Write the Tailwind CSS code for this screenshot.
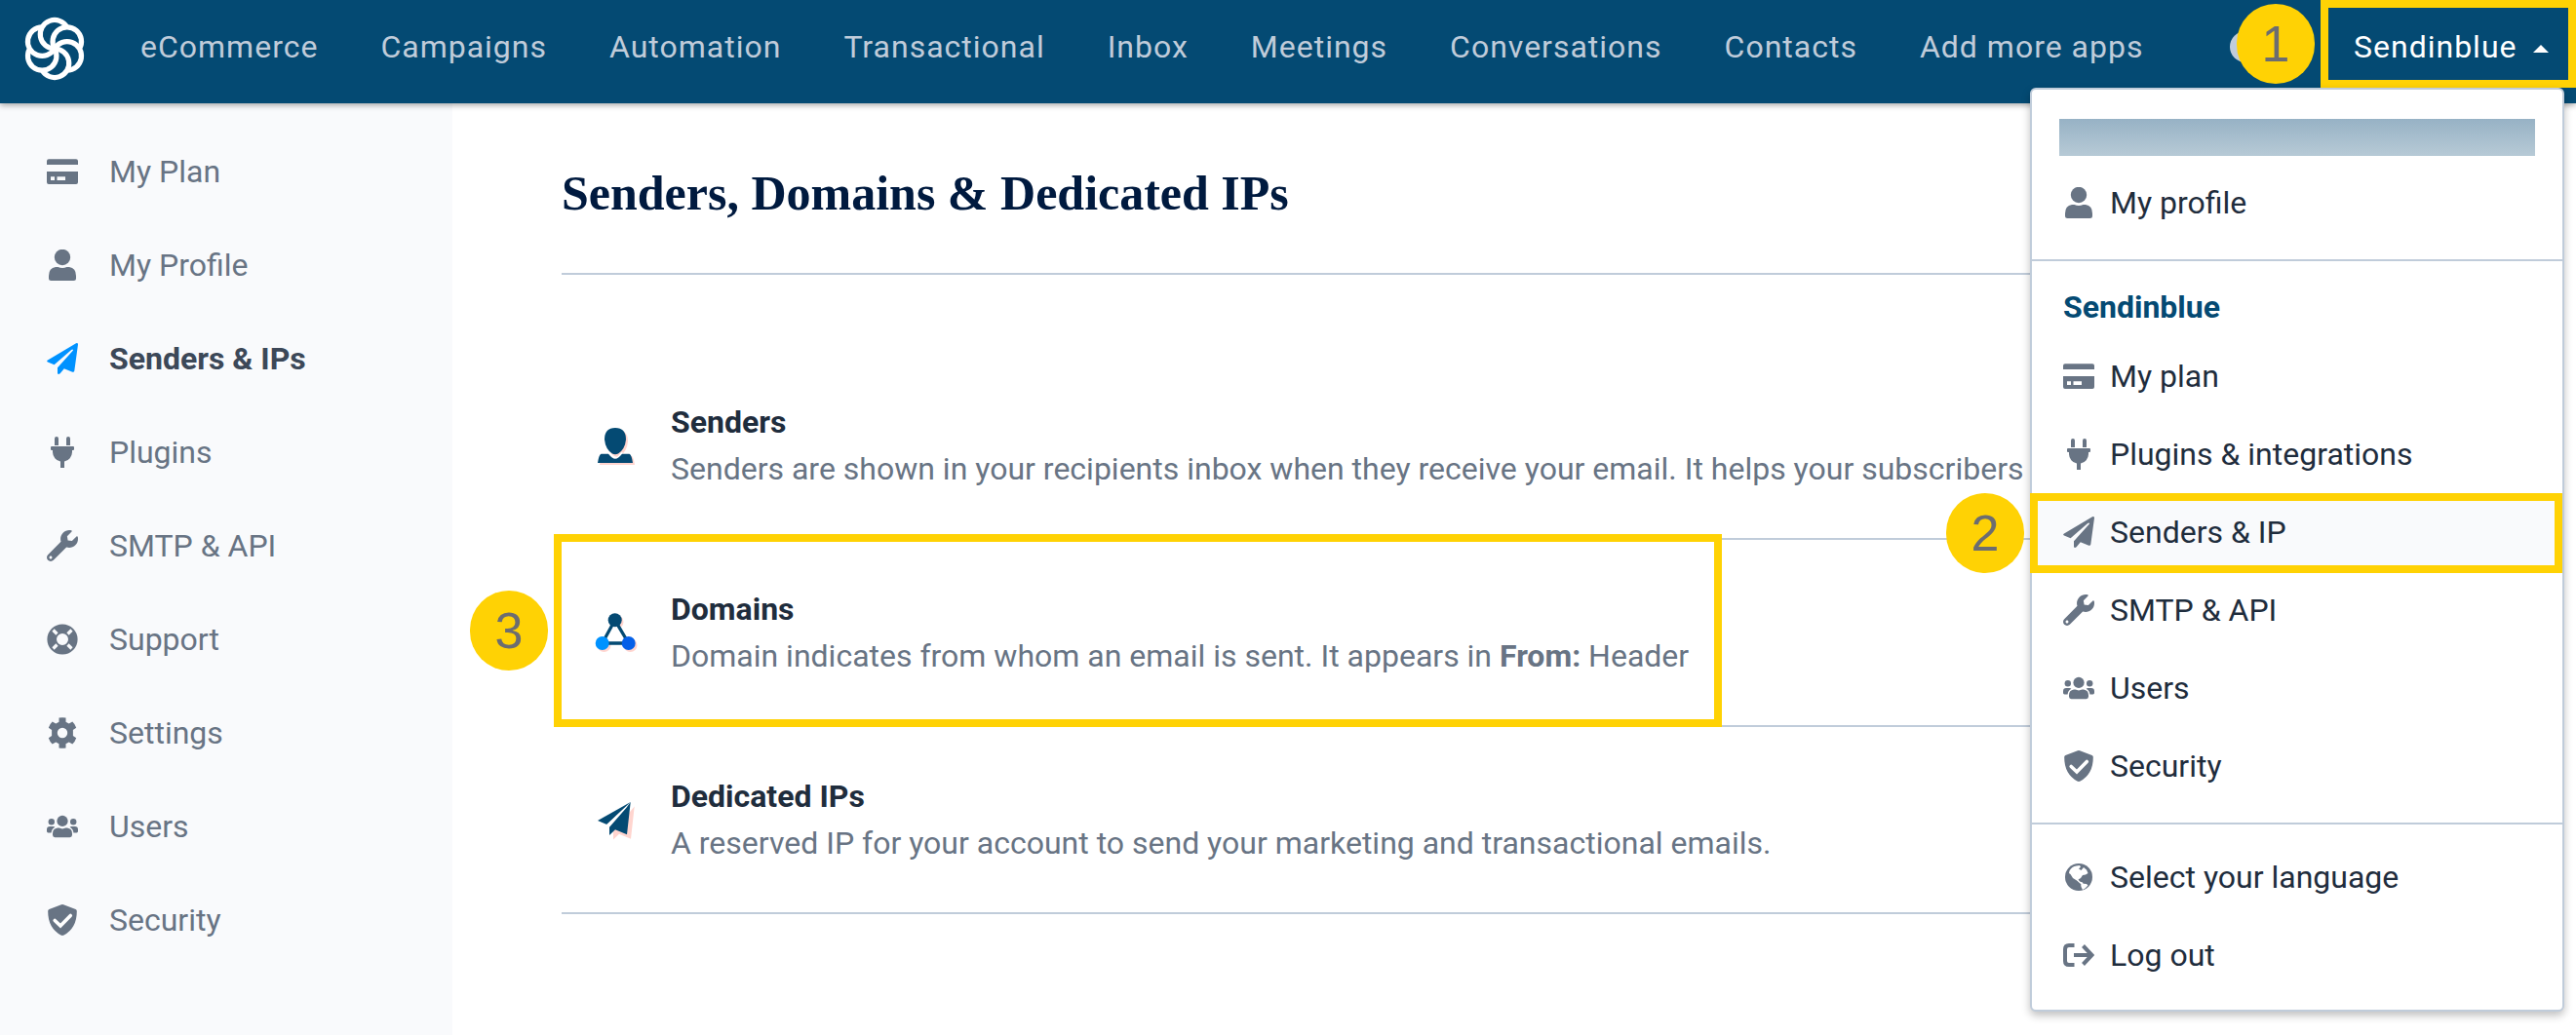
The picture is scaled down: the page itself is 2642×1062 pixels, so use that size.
<!DOCTYPE html>
<html lang="en">
<head>
<meta charset="utf-8">
<meta name="viewport" content="width=device-width, initial-scale=1">
<title>Senders, Domains &amp; Dedicated IPs</title>
<script src="https://cdn.jsdelivr.net/npm/@tailwindcss/browser@4"></script>
</head>
<body class="flex min-h-screen flex-col overflow-x-hidden bg-white font-[Roboto,sans-serif] text-[32px] leading-[48px] text-[#687484]">

<!-- Shared icon shapes -->
<svg class="hidden" aria-hidden="true">
  <symbol id="card" viewBox="0 0 32 32"><path d="M2 3.300h28q2 0 2 2V9H0V5.300q0-2 2-2zM0 16h32v11q0 2-2 2H2q-2 0-2-2zM4 21.200v3.800h4v-3.800zm6.500 0v3.800H19v-3.800z" fill-rule="evenodd"/></symbol>
  <symbol id="user" viewBox="0 0 32 32"><circle cx="16" cy="8" r="8.200"/><path d="M9 18h2.500q4.500 2 9 0H23q7 1 7 9v2.500q0 2.500-2.500 2.500h-23Q2 32 2 29.500V27q0-8 7-9z"/></symbol>
  <symbol id="plane" viewBox="0 0 32 32"><path d="M1 17.600 30 .2Q32-.4 32 1.500L28.300 28.500Q27.900 30.300 26.300 29.700L17.800 26.300 13.600 31.300Q11.200 33 11 30.400V25.200L27 7.500Q26.800 6 25.200 7L7.600 22.200 1 19.600Q-.7 18.600 1 17.600z"/></symbol>
  <symbol id="plug" viewBox="0 0 32 32"><path d="M8 2a2 2 0 0 1 4 0v7H8zM20 2a2 2 0 0 1 4 0v7h-4zM5 10h22q1 0 1 1v2q0 1-1 1h-1v2a10 10 0 0 1-8 9.600V32h-4v-6.400A10 10 0 0 1 6 16v-2H5q-1 0-1-1v-2q0-1 1-1z"/></symbol>
  <symbol id="wrench" viewBox="0 0 512 512"><path d="M507.730 109.100c-2.240-9.030-13.540-12.090-20.120-5.510l-74.360 74.360-67.880-11.310-11.310-67.880 74.360-74.360c6.620-6.620 3.430-17.900-5.660-20.160-47.380-11.740-99.550.910-136.580 37.930-39.640 39.640-50.550 97.100-34.050 147.200L18.740 402.760c-24.990 24.990-24.990 65.510 0 90.500 24.990 24.990 65.510 24.990 90.500 0l213.210-213.210c50.120 16.710 107.470 5.680 147.370-34.220 37.070-37.070 49.700-89.320 37.910-136.730zM64 472c-13.250 0-24-10.750-24-24 0-13.260 10.750-24 24-24s24 10.740 24 24c0 13.250-10.750 24-24 24z"/></symbol>
  <symbol id="ring" viewBox="0 0 32 32"><circle cx="16" cy="16" r="10.800" fill="none" stroke="currentColor" stroke-width="9.600"/><path d="m6.500 6.500 4 4m11 11 4 4m0-19-4 4m-11 11-4 4" fill="none" stroke="#f9fafc" stroke-width="3.200"/></symbol>
  <symbol id="gear" viewBox="0 0 32 32"><path d="M12.500.6q3.500-.8 7 0V4.800l3.200 1.800 3.600-2q2.800 2.600 3.900 6.200l-3.300 2.300v5.800l3.300 2.300q-1.100 3.600-3.900 6.200l-3.600-2-3.200 1.800v4.200q-3.500.8-7 0v-4.200l-3.200-1.800-3.600 2Q2.900 24.800 1.800 21.200l3.300-2.300v-5.800L1.800 10.800Q2.900 7.200 5.700 4.600l3.600 2 3.200-1.800zM16 10.800a5.200 5.200 0 1 0 0 10.400 5.200 5.200 0 0 0 0-10.400z" fill-rule="evenodd"/></symbol>
  <symbol id="users" viewBox="0 0 32 32"><circle cx="16" cy="10.400" r="5.600"/><circle cx="4.800" cy="11.200" r="3.200"/><circle cx="27.200" cy="11.200" r="3.200"/><path d="M11 17.600h1.500q3.500 1.600 7 0H21q5 .8 5 5.800v1.400q0 2.400-2.400 2.400H8.400Q6 27.200 6 24.800v-1.400q0-5 5-5.800zM3.200 16H6.400q1.200 0 2 .8Q5 18.400 4.600 22.400H1.400Q0 22.400 0 21v-1.800Q0 16 3.200 16zM28.800 16q3.200 0 3.200 3.200V21q0 1.400-1.400 1.400h-3.200Q27 18.400 23.600 16.800q.8-.8 2-.8z"/></symbol>
  <symbol id="shield" viewBox="0 0 32 32"><path d="M14.900.3q1.100-.5 2.200 0L29.600 5q1.200.5 1.200 1.800Q31 24 17.600 31.600q-1.600.8-3.200 0Q1 24 1.200 6.800 1.200 5.500 2.400 5z"/><path d="m8.200 16.500 5.800 5.500L24.300 11.500" fill="none" stroke="#fff" stroke-width="3.600" stroke-linecap="round"/></symbol>
  <symbol id="globe" viewBox="0 0 32 32"><circle cx="16" cy="16" r="14"/><path d="M6.500 9.500Q9 5 13.500 4.500L17 4l1 1.500-2 2 2.500 1.500L21 6l3 2.500L25.500 12 23 13.500l-3 .5-2 3-2.500 1.500 1.500 2 3 1 1 2-3-.5-4-3.500-4-2.500-2.500-4-1.500-1zM18 22.500l6 .5 1.500 1.500-3 3-2.500 1.500-1.500-3z" fill="#fff"/></symbol>
  <symbol id="exit" viewBox="0 0 32 32"><path d="M11.500 6H6Q2 6 2 10v12q0 4 4 4h5.500M11 16h18M20.500 6.500 29.500 16l-9 9.500" fill="none" stroke="currentColor" stroke-width="4"/></symbol>
</svg>

<header class="relative z-10 flex h-[106px] shrink-0 items-start bg-[#044a73] pl-6 text-[#c0ccda] shadow-[0_2px_6px_rgba(0,0,0,0.35)]">
  <a href="#" aria-label="Home" class="mt-[18px] block size-16 shrink-0">
    <svg viewBox="-32 -32 64 64" class="size-16 overflow-visible" fill="none" stroke="#fff" stroke-width="5.200">
      <path d="M0 0A14.750 14.750 0 1 1 12.770-22.120"/>
      <path d="M0 0A14.750 14.750 0 1 1 12.770-22.120" transform="rotate(60)"/>
      <path d="M0 0A14.750 14.750 0 1 1 12.770-22.120" transform="rotate(120)"/>
      <path d="M0 0A14.750 14.750 0 1 1 12.770-22.120" transform="rotate(180)"/>
      <path d="M0 0A14.750 14.750 0 1 1 12.770-22.120" transform="rotate(240)"/>
      <path d="M0 0A14.750 14.750 0 1 1 12.770-22.120" transform="rotate(300)"/>
    </svg>
  </a>
  <nav class="ml-14 mt-6 flex gap-16 whitespace-nowrap tracking-[1px]">
    <a href="#">eCommerce</a>
    <a href="#">Campaigns</a>
    <a href="#">Automation</a>
    <a href="#">Transactional</a>
    <a href="#">Inbox</a>
    <a href="#">Meetings</a>
    <a href="#">Conversations</a>
    <a href="#">Contacts</a>
    <a href="#">Add more apps</a>
  </nav>

  <div class="relative ml-auto w-[262px] shrink-0">
    <span class="absolute -left-[93px] top-[32px] size-8 rounded-full bg-[#c0ccda]"></span>
    <span class="absolute -left-[86px] top-1 flex h-[82px] w-20 items-center justify-center rounded-full bg-[#ffd204] font-[Liberation_Sans,Arial,sans-serif] text-[52px] text-[#6c6d70]">1</span>
    <button type="button" class="flex h-24 w-full items-center gap-4 pl-[34px] tracking-[1px] text-white">
      Sendinblue
      <svg viewBox="0 0 16 8" class="mt-1 h-2 w-4" fill="currentColor"><path d="M0 8 8 0l8 8z"/></svg>
    </button>
    <span class="pointer-events-none absolute inset-x-0 top-0 h-[90px] border-8 border-[#ffd204]"></span>

    <div class="absolute right-3 top-[90px] w-[548px] rounded-md border-2 border-[#c0ccda] bg-white text-[#1f2d3d] shadow-[0_4px_8px_rgba(0,0,0,0.25)]">
      <div class="border-b-2 border-[#c0ccda] pb-[18px] pt-[30px]">
        <div class="mx-7 h-[38px] bg-linear-to-b from-[#97b2c5] to-[#b7cad6]"></div>
        <a href="#" class="mt-2 flex h-20 items-center gap-4 px-8"><svg class="size-8 fill-current text-[#687484]"><use href="#user"/></svg>My profile</a>
      </div>
      <div class="border-b-2 border-[#c0ccda] pb-[18px] pt-4">
        <h2 class="flex h-[62px] items-center px-8 font-bold text-[#044a73]">Sendinblue</h2>
        <a href="#" class="flex h-20 items-center gap-4 px-8"><svg class="size-8 fill-current text-[#687484]"><use href="#card"/></svg>My plan</a>
        <a href="#" class="flex h-20 items-center gap-4 px-8"><svg class="size-8 fill-current text-[#687484]"><use href="#plug"/></svg>Plugins &amp; integrations</a>
        <a href="#" class="relative flex h-20 items-center gap-4 bg-[#f9fafc] px-8">
          <svg class="size-8 fill-current text-[#687484]"><use href="#plane"/></svg>Senders &amp; IP
          <span class="absolute -bottom-0.5 -left-0.5 right-0 top-0 border-8 border-[#ffd204]"></span>
          <span class="absolute -left-[88px] top-0 flex h-[82px] w-20 items-center justify-center rounded-full bg-[#ffd204] font-[Liberation_Sans,Arial,sans-serif] text-[52px] text-[#6c6d70]">2</span>
        </a>
        <a href="#" class="flex h-20 items-center gap-4 px-8"><svg class="size-8 fill-current text-[#687484]"><use href="#wrench"/></svg>SMTP &amp; API</a>
        <a href="#" class="flex h-20 items-center gap-4 px-8"><svg class="size-8 fill-current text-[#687484]"><use href="#users"/></svg>Users</a>
        <a href="#" class="flex h-20 items-center gap-4 px-8"><svg class="size-8 fill-current text-[#687484]"><use href="#shield"/></svg>Security</a>
      </div>
      <div class="pb-4 pt-[14px]">
        <a href="#" class="flex h-20 items-center gap-4 px-8"><svg class="size-8 fill-current text-[#687484]"><use href="#globe"/></svg>Select your language</a>
        <a href="#" class="flex h-20 items-center gap-4 px-8"><svg class="size-8 fill-current text-[#687484]"><use href="#exit"/></svg>Log out</a>
      </div>
    </div>
  </div>
</header>

<div class="flex flex-1">
  <aside class="w-[464px] shrink-0 bg-[#f9fafc] pt-[22px]">
    <nav>
      <a href="#" class="flex h-24 items-center gap-8 pl-12"><svg class="size-8 fill-current"><use href="#card"/></svg>My Plan</a>
      <a href="#" class="flex h-24 items-center gap-8 pl-12"><svg class="size-8 fill-current"><use href="#user"/></svg>My Profile</a>
      <a href="#" class="flex h-24 items-center gap-8 pl-12 font-bold text-[#3c4858]"><svg class="size-8 fill-current text-[#0092ff]"><use href="#plane"/></svg>Senders &amp; IPs</a>
      <a href="#" class="flex h-24 items-center gap-8 pl-12"><svg class="size-8 fill-current"><use href="#plug"/></svg>Plugins</a>
      <a href="#" class="flex h-24 items-center gap-8 pl-12"><svg class="size-8 fill-current"><use href="#wrench"/></svg>SMTP &amp; API</a>
      <a href="#" class="flex h-24 items-center gap-8 pl-12"><svg class="size-8 fill-current"><use href="#ring"/></svg>Support</a>
      <a href="#" class="flex h-24 items-center gap-8 pl-12"><svg class="size-8 fill-current"><use href="#gear"/></svg>Settings</a>
      <a href="#" class="flex h-24 items-center gap-8 pl-12"><svg class="size-8 fill-current"><use href="#users"/></svg>Users</a>
      <a href="#" class="flex h-24 items-center gap-8 pl-12"><svg class="size-8 fill-current"><use href="#shield"/></svg>Security</a>
    </nav>
  </aside>

  <main class="min-w-0 flex-1 px-28">
    <h1 class="border-b-2 border-[#c0ccda] pb-[50px] pt-[60px] font-[Liberation_Serif,serif] text-[50px]/[64px] font-bold text-[#001a3f]">Senders, Domains &amp; Dedicated IPs</h1>
    <ul class="mt-20 whitespace-nowrap">
      <li class="h-48 border-b-2 border-[#c0ccda]">
        <a href="#" class="flex h-full w-fit items-center gap-9 pl-9">
          <svg viewBox="0 0 40 40" class="size-10 overflow-visible"><path fill="#ffd5cf" transform="translate(2 2)" d="M19 2Q30 2 30 14 29 24 22 29q-3 1.500-6 0Q9 24 8 14 8 2 19 2zM1 38Q2 30 4.500 28.700H13q3 4.500 6 4.500t6-4.500h8.500Q36 30 37 38z"/><path fill="none" stroke="#fff" stroke-width="3" d="M11.500 27.500q4.500 6.500 7.500 6.500t7.500-6.500"/><path fill="#044a73" d="M19 2Q30 2 30 14 29 24 22 28.500q-3 1.500-6 0Q9 24 8 14 8 2 19 2zM1 38Q2 30 4.500 28.700H12q4 5 7 5t7-5h7.500Q36 30 37 38z"/></svg>
          <span><strong class="block font-bold text-[#1f2d3d]">Senders</strong>Senders are shown in your recipients inbox when they receive your email. It helps your subscribers</span>
        </a>
      </li>
      <li class="h-48 border-b-2 border-[#c0ccda]">
        <a href="#" class="relative flex h-full w-fit items-center gap-9 pl-9 pr-[34px]">
          <svg viewBox="0 0 40 40" class="size-10 overflow-visible"><g fill="#ffd5cf"><circle cx="20.500" cy="9" r="7"/><circle cx="7.500" cy="33" r="7"/><circle cx="34.500" cy="33" r="7"/></g><path d="M18.700 7.300 5.700 31h27z" fill="#fff" stroke="#044a73" stroke-width="3.300"/><circle cx="18.700" cy="7.300" r="7" fill="#044a73"/><circle cx="5.700" cy="31" r="7" fill="#0092ff"/><circle cx="32.700" cy="31" r="7" fill="#0560e8"/></svg>
          <span><strong class="block font-bold text-[#1f2d3d]">Domains</strong>Domain indicates from whom an email is sent. It appears in <b class="font-bold">From:</b> Header</span>
          <span class="absolute -bottom-0.5 -left-2 -top-1.5 right-0 border-8 border-[#ffd204]"></span>
          <span class="absolute -left-[94px] top-[52px] flex h-[82px] w-20 items-center justify-center rounded-full bg-[#ffd204] font-[Liberation_Sans,Arial,sans-serif] text-[52px] text-[#6c6d70]">3</span>
        </a>
      </li>
      <li class="h-48 border-b-2 border-[#c0ccda]">
        <a href="#" class="flex h-full w-fit items-center gap-9 pl-9">
          <svg viewBox="0 0 40 40" class="size-10 overflow-visible"><path fill="#ffd5cf" transform="translate(4 4.500)" d="M34.700 2 31 35.300 19 30.300 13 36v-8.300z"/><path fill="#044a73" d="M34.700 2 1 21l9.300 4z"/><path fill="#fff" d="M10.300 25 31.500 5.500 13 28z"/><path fill="#044a73" d="M34.700 2 31 35.300 19 30.300 13 36v-8.300L30.300 8z"/></svg>
          <span><strong class="block font-bold text-[#1f2d3d]">Dedicated IPs</strong>A reserved IP for your account to send your marketing and transactional emails.</span>
        </a>
      </li>
    </ul>
  </main>
</div>
</body>
</html>
